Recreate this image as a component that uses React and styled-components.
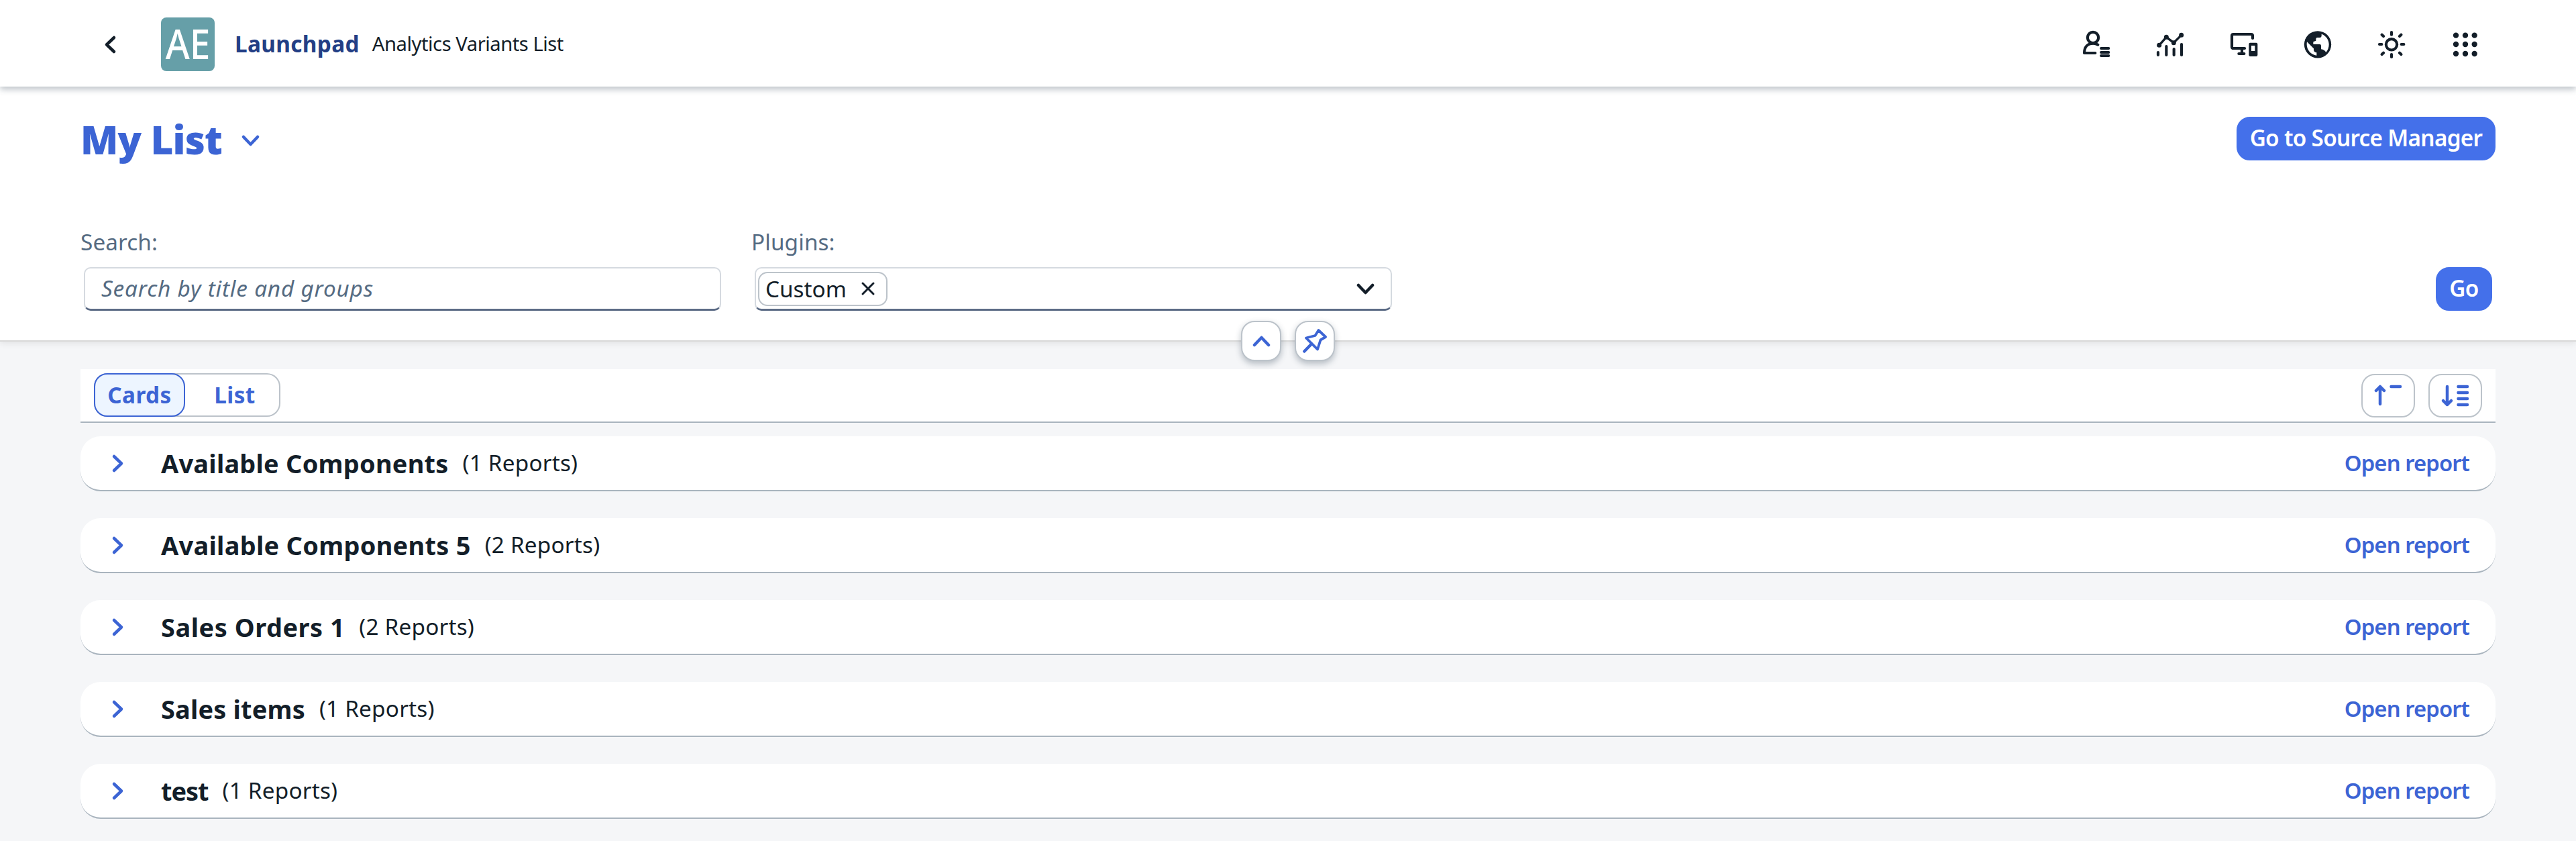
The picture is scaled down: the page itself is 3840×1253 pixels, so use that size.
import React from "react"

import styled, { createGlobalStyle } from "styled-components"

const textColor = "#131e29"
const labelColor = "#556b82"
const primaryColor = "#3c64d4"
const buttonColor = "#4470ea"
const outlineColor = "#bcc3ca"
const lineColor = "#a9b4be"
const pageColor = "#f5f6f8"

const GlobalStyle = createGlobalStyle`
  * {
    box-sizing: border-box;
  }
  body {
    margin: 0;
    background: ${pageColor};
    color: ${textColor};
    font-family: "Noto Sans", "Open Sans", sans-serif;
    font-size: 33.3px;
  }
  button, input {
    font: inherit;
    color: inherit;
    padding: 0;
  }
`

const Page = styled.div`
  min-height: 1253px;
`

/* shell bar */

const ShellBar = styled.header`
  position: relative;
  z-index: 1;
  display: flex;
  align-items: center;
  height: 129px;
  padding: 0 145px 0 157px;
  background: #fff;
  box-shadow: 0 4px 9px rgba(34, 53, 72, 0.3);
`

const BackButton = styled.button`
  display: flex;
  border: 0;
  background: none;
  margin: 3px 68px 0 0;
`

const Logo = styled.div`
  width: 80px;
  height: 80px;
  margin: 3px 30px 0 0;
  border-radius: 8px;
  background: #669fa8;
  color: #fff;
  font-size: 62.5px;
  font-weight: 500;
  line-height: 76px;
  text-align: center;
`

const LogoText = styled.span`
  display: block;
  transform: scaleX(0.88);
`

const ShellTitle = styled.span`
  margin-right: 19px;
  color: #233f85;
  font-weight: 700;
  letter-spacing: 0.35px;
`

const ShellSubtitle = styled.span`
  font-size: 29.2px;
  letter-spacing: -0.47px;
`

const ShellActions = styled.nav`
  display: flex;
  gap: 70px;
  margin: 3px 0 0 auto;
`

const ShellIcon = styled.svg`
  width: 40px;
  height: 40px;
  overflow: visible;
  fill: none;
  stroke: ${textColor};
  stroke-width: 12.5;
  stroke-linecap: round;
  stroke-linejoin: round;
`

const LineIcon = styled.svg`
  display: block;
  overflow: visible;
  fill: none;
  stroke: ${(props) => props.$color || primaryColor};
  stroke-width: 4.5;
  stroke-linecap: round;
  stroke-linejoin: round;
`

/* filter header */

const FilterPanel = styled.section`
  position: relative;
  padding: 45px 120px 44px;
  background: #fff;
  border-bottom: 2px solid #d9d9d9;
  box-shadow: 0 3px 9px rgba(0, 0, 0, 0.08);
`

const TitleRow = styled.div`
  display: flex;
  align-items: center;
  height: 65px;
  margin-bottom: 97px;
`

const Title = styled.h1`
  margin: 2px 30px 0 0;
  color: ${primaryColor};
  font-size: 58.3px;
  font-weight: 900;
  letter-spacing: -0.85px;
`

const TitleArrow = styled.span`
  margin-top: 5px;
`

const PrimaryButton = styled.button`
  width: ${(props) => props.$width}px;
  height: 65px;
  margin: 0 ${(props) => props.$inset || 0}px 0 auto;
  padding-bottom: 3px;
  border: 2px solid ${buttonColor};
  border-radius: 20px;
  background: ${buttonColor};
  color: #fff;
  font-weight: 600;
  letter-spacing: -0.7px;
  white-space: nowrap;
`

const FilterRow = styled.div`
  display: flex;
  align-items: flex-end;
  gap: 40px;
`

const Field = styled.label`
  width: 960px;
`

const FieldLabel = styled.span`
  display: block;
  margin-bottom: 14px;
  color: ${labelColor};
  line-height: 48px;
  letter-spacing: 0.1px;
`

const controlBox = `
  display: flex;
  align-items: center;
  width: 950px;
  height: 65px;
  margin: 0 5px;
  border: 2px solid #d5dae0;
  border-bottom: 3px solid #5b6b85;
  border-radius: 10px;
  background: #fff;
`

const SearchInput = styled.input`
  ${controlBox}
  padding: 0 24px 2px;
  letter-spacing: 0.8px;
  &::placeholder {
    color: ${labelColor};
    font-style: italic;
    opacity: 1;
  }
`

const PluginSelect = styled.div`
  ${controlBox}
  justify-content: space-between;
  padding: 0 25px 0 3px;
`

const Token = styled.span`
  display: flex;
  align-items: center;
  gap: 22px;
  width: 193px;
  height: 51px;
  margin-top: 1px;
  padding: 0 0 2px 9px;
  border: 2px solid ${outlineColor};
  border-radius: 14px;
`

const PanelActions = styled.div`
  position: absolute;
  left: 50%;
  bottom: -31px;
  display: flex;
  gap: 20px;
  transform: translateX(-50%);
`

const RoundButton = styled.button`
  display: flex;
  align-items: center;
  justify-content: center;
  width: 60px;
  height: 60px;
  border: 2px solid ${outlineColor};
  border-radius: 20px;
  background: #fff;
  box-shadow: 0 4px 10px rgba(34, 53, 72, 0.3);
`

/* report list */

const Content = styled.main`
  padding: 41px 120px 33px;
`

const Toolbar = styled.div`
  display: flex;
  align-items: flex-start;
  height: 80px;
  padding: 6px 20px 0;
  background: #fff;
  border-bottom: 2px solid ${lineColor};
`

const Segmented = styled.div`
  display: flex;
  width: 278px;
  height: 65px;
  border-radius: 20px;
  box-shadow: inset 0 0 0 2px ${outlineColor};
`

const Segment = styled.button`
  width: ${(props) => (props.$active ? 136 : 142)}px;
  height: 65px;
  padding: 0 0 2px ${(props) => (props.$active ? 0 : 6)}px;
  border: 2px solid ${(props) => (props.$active ? primaryColor : "transparent")};
  border-radius: 20px;
  background: ${(props) => (props.$active ? "#edf5ff" : "transparent")};
  color: ${primaryColor};
  font-weight: 700;
  letter-spacing: 0.4px;
`

const ToolbarActions = styled.div`
  display: flex;
  gap: 20px;
  margin: 1px 0 0 auto;
`

const ToolButton = styled.button`
  display: flex;
  align-items: center;
  justify-content: center;
  width: 80px;
  height: 65px;
  padding-bottom: 1px;
  border: 2px solid ${outlineColor};
  border-radius: 20px;
  background: #fff;
`

const GroupList = styled.div`
  display: flex;
  flex-direction: column;
  gap: 40px;
  margin-top: 20px;
`

const GroupRow = styled.article`
  display: flex;
  align-items: center;
  height: 82px;
  padding: 0 39px 0 48px;
  background: #fff;
  border-bottom: 2px solid ${lineColor};
  border-radius: 30px;
`

const GroupTitle = styled.h2`
  margin: 0 21px 1px 57px;
  font-size: 37.9px;
  font-weight: 700;
  letter-spacing: ${(props) => props.$tracking}px;
`

const GroupCount = styled.span`
  margin-bottom: 2px;
  letter-spacing: 0.2px;
`

const OpenLink = styled.a`
  margin: 0 0 2px auto;
  color: ${primaryColor};
  font-size: 32.8px;
  font-weight: 600;
  letter-spacing: -0.9px;
`

const groups = [
  { title: "Available Components", count: 1, tracking: 0.25 },
  { title: "Available Components 5", count: 2, tracking: 0.3 },
  { title: "Sales Orders 1", count: 2, tracking: 0.55 },
  { title: "Sales items", count: 1, tracking: 0.2 },
  { title: "test", count: 1, tracking: -1 },
]

const Chevron = ({ direction, color }) => {
  const shapes = {
    left: [15, 25, "M13 2L2 12.5L13 23"],
    right: [15, 25, "M2 2L13 12.5L2 23"],
    up: [25, 15, "M2 13L12.5 2L23 13"],
    down: [25, 15, "M2 2L12.5 13L23 2"],
  }
  const [w, h, d] = shapes[direction]
  return (
    <LineIcon width={w} height={h} viewBox={`0 0 ${w} ${h}`} $color={color}>
      <path d={d} />
    </LineIcon>
  )
}

const UserIcon = () => (
  <ShellIcon viewBox="0 0 120 120">
    <circle cx="45" cy="30" r="24.5" />
    <path d="M67 62Q57 56 46 56C20 56 6 74 6 99H55" />
    <path d="M81 78H115M81 96H115M81 111H115" strokeWidth="11.5" />
  </ShellIcon>
)

const ChartIcon = () => (
  <ShellIcon viewBox="0 0 120 120">
    <path d="M11 64L43 28L76 53L110 19" strokeWidth="10" />
    <g fill={textColor} stroke="none">
      <circle cx="11" cy="64" r="10.5" />
      <circle cx="43" cy="28" r="10.5" />
      <circle cx="76" cy="53" r="10.5" />
      <circle cx="110" cy="19" r="10.5" />
    </g>
    <path d="M6 96V108M43 69V108M77 81V108M111 60V108" />
  </ShellIcon>
)

const DevicesIcon = () => (
  <ShellIcon viewBox="0 0 120 120">
    <path d="M99 33V22Q99 15 92 15H13Q6 15 6 22V71Q6 78 13 78H63" />
    <path d="M51 78V100M37 102H61" />
    <path
      d="M88 53H115Q121 53 121 59V108Q121 114 115 114H88Q82 114 82 108V59Q82 53 88 53ZM93 66V90H109V66Z"
      fill={textColor}
      fillRule="evenodd"
      stroke="none"
    />
  </ShellIcon>
)

const GlobeIcon = () => (
  <ShellIcon viewBox="0 0 120 120">
    <circle cx="60" cy="61" r="60.5" fill={textColor} stroke="none" />
    <g fill="#fff" stroke="none">
      <path d="M77 14C97 21 110 40 110 61C110 75 105 87 97 96Q91 84 75 82V66Q75 60 69 60H40V49L52 44V36Q52 30 58 30H69Q76 30 77 23Z" />
      <path d="M12 49L42 79V86Q44 96 55 97V110C30 107 11 86 11 61Q11 54 12 49Z" />
    </g>
  </ShellIcon>
)

const SunIcon = () => (
  <ShellIcon viewBox="0 0 120 120">
    <circle cx="60" cy="61" r="24.5" />
    <path d="M60 6V17M60 105V117M6 60H16M104 60H115M17 17L24 24M103 17L96 24M17 105L24 98M103 105L96 98" />
  </ShellIcon>
)

const GridIcon = () => (
  <ShellIcon viewBox="0 0 120 120">
    <g fill={textColor} stroke="none">
      {[20, 60, 102].map((y) =>
        [18, 60, 101].map((x) => <circle key={`${x}-${y}`} cx={x} cy={y} r="12.5" />)
      )}
    </g>
  </ShellIcon>
)

const PinIcon = () => (
  <LineIcon width="36" height="36" viewBox="0 0 36 36">
    <path d="M23.5 2L34 12L26.5 16.5L22 30.5L5 13.5L18.5 10Z" strokeWidth="3.8" />
    <path d="M2.3 33.5L13 22.5" />
  </LineIcon>
)

const App = () => (
  <Page>
    <GlobalStyle />
    <ShellBar>
      <BackButton aria-label="Back">
        <Chevron direction="left" color={textColor} />
      </BackButton>
      <Logo>
        <LogoText>AE</LogoText>
      </Logo>
      <ShellTitle>Launchpad</ShellTitle>
      <ShellSubtitle>Analytics Variants List</ShellSubtitle>
      <ShellActions>
        <UserIcon />
        <ChartIcon />
        <DevicesIcon />
        <GlobeIcon />
        <SunIcon />
        <GridIcon />
      </ShellActions>
    </ShellBar>

    <FilterPanel>
      <TitleRow>
        <Title>My List</Title>
        <TitleArrow>
          <Chevron direction="down" />
        </TitleArrow>
        <PrimaryButton $width={386}>Go to Source Manager</PrimaryButton>
      </TitleRow>
      <FilterRow>
        <Field>
          <FieldLabel>Search:</FieldLabel>
          <SearchInput placeholder="Search by title and groups" />
        </Field>
        <Field as="div">
          <FieldLabel>Plugins:</FieldLabel>
          <PluginSelect>
            <Token>
              Custom
              <LineIcon width="20" height="20" viewBox="0 0 20 20" $color={textColor}>
                <path d="M2 2L18 18M18 2L2 18" strokeWidth="3" />
              </LineIcon>
            </Token>
            <Chevron direction="down" color={textColor} />
          </PluginSelect>
        </Field>
        <PrimaryButton $width={84} $inset={5}>
          Go
        </PrimaryButton>
      </FilterRow>
      <PanelActions>
        <RoundButton aria-label="Collapse header">
          <Chevron direction="up" />
        </RoundButton>
        <RoundButton aria-label="Pin header">
          <PinIcon />
        </RoundButton>
      </PanelActions>
    </FilterPanel>

    <Content>
      <Toolbar>
        <Segmented>
          <Segment $active>Cards</Segment>
          <Segment>List</Segment>
        </Segmented>
        <ToolbarActions>
          <ToolButton aria-label="Sort ascending">
            <LineIcon width="40" height="31" viewBox="0 0 40 31">
              <path d="M8 28V2M2 8L8 2L14 8M24.5 2H38" />
            </LineIcon>
          </ToolButton>
          <ToolButton aria-label="Sort descending">
            <LineIcon width="40" height="31" viewBox="0 0 40 31">
              <path d="M8 2V29M2 23L8 29L14 23M24.5 2H38M24.5 11H38M24.5 20H38M24.5 29H38" />
            </LineIcon>
          </ToolButton>
        </ToolbarActions>
      </Toolbar>
      <GroupList>
        {groups.map((group) => (
          <GroupRow key={group.title}>
            <Chevron direction="right" />
            <GroupTitle $tracking={group.tracking}>{group.title}</GroupTitle>
            <GroupCount>{`(${group.count} Reports)`}</GroupCount>
            <OpenLink>Open report</OpenLink>
          </GroupRow>
        ))}
      </GroupList>
    </Content>
  </Page>
)

export default App
